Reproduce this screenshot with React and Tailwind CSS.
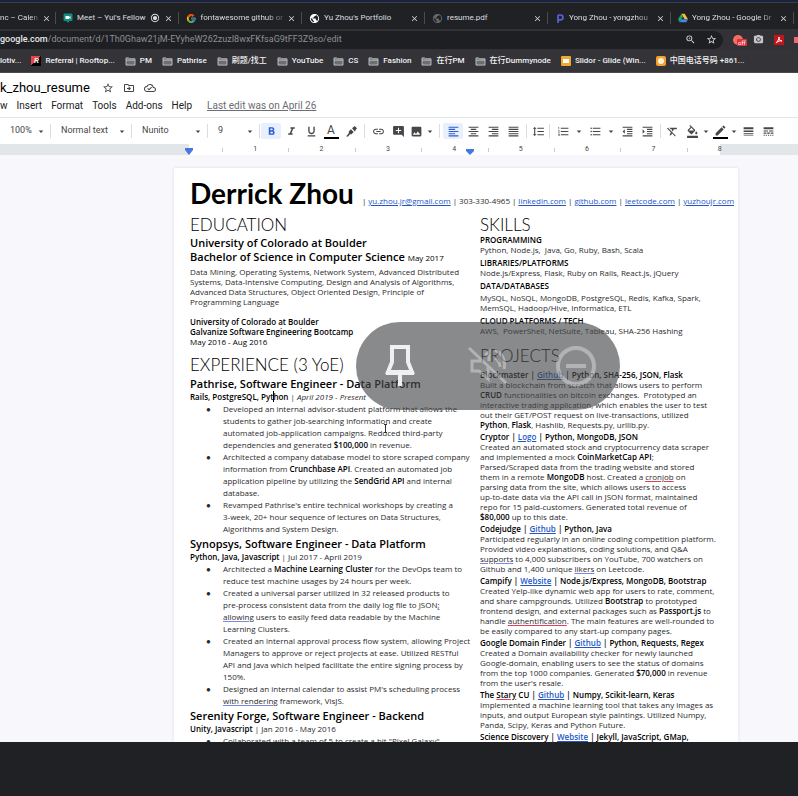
import React from "react";
import {
  MdStarBorder, MdOutlineDriveFileMove, MdOutlineCloudDone, MdFormatBold, MdFormatItalic,
  MdFormatUnderlined, MdLink, MdAddComment, MdImage,
  MdFormatAlignLeft, MdFormatAlignCenter, MdFormatAlignRight, MdFormatAlignJustify,
  MdFormatLineSpacing, MdFormatListNumbered, MdFormatListBulleted, MdFormatIndentDecrease,
  MdFormatIndentIncrease, MdFormatClear, MdFormatColorFill, MdEdit, MdLineWeight, MdLineStyle,
  MdArrowDropDown, MdClose, MdPublic, MdZoomIn, MdCameraAlt, MdRadioButtonChecked,
} from "react-icons/md";
import { FcGoogle } from "react-icons/fc";

const DriveLogo = () => (
  <svg viewBox="0 0 24 22" className="h-2.5 w-2.5">
    <path d="M8 1h8l8 13h-8z" fill="#fbc02d" />
    <path d="M8 1L0 14l4 7L12 8z" fill="#1fa463" />
    <path d="M8 14h16l-4 7H4z" fill="#4285f4" />
  </svg>
);
const MeetLogo = () => (
  <svg viewBox="0 0 20 20" className="h-2.5 w-2.5">
    <path d="M3 1h14a2 2 0 0 1 2 2v11a2 2 0 0 1-2 2h-4l-3 4-3-4H3a2 2 0 0 1-2-2V3a2 2 0 0 1 2-2z" fill="#128c7e" />
    <path d="M5 6h7v2l3-2v6l-3-2v2H5z" fill="#fff" />
  </svg>
);
const PLogo = () => (
  <svg viewBox="0 0 10 10" className="h-2.5 w-2.5" fill="none" stroke="#5b5fe0" strokeWidth="1.7">
    <path d="M3 10V2M3 2h2.500a2.300 2.300 0 0 1 0 4.800H3" />
  </svg>
);
const Marker = () => (
  <svg viewBox="0 0 24 24" width="1em" height="1em" fill="currentColor">
    <path d="M13 6l5-4 4 4-4 6zM11 8l5 5-4 4H9l-3 4H2l5-6v-3z" />
  </svg>
);

const tabs = [
  { icon: <MeetLogo />, title: "Meet – Yui's Fellow", audio: true },
  { icon: <FcGoogle className="text-[11px]" />, title: "fontawesome github or", fade: true },
  { icon: <MdPublic className="text-[11px] text-white" />, title: "Yu Zhou's Portfolio" },
  { icon: <MdPublic className="text-[11px] text-[#66686b]" />, title: "resume.pdf" },
  { icon: <PLogo />, title: "Yong Zhou - yongzhou", fade: true },
  { icon: <DriveLogo />, title: "Yong Zhou - Google Dr", fade: true },
];

function TabTitle({ fade, children }) {
  return (
    <span className={"flex-1 whitespace-nowrap" + (fade ? " [mask-image:linear-gradient(to_right,black_80%,#0004)]" : "")}>
      {children}
    </span>
  );
}

function CloseTab() {
  return (
    <button aria-label="Close tab" className="text-[9px] text-[#d5d6d8]">
      <MdClose />
    </button>
  );
}

const Folder = () => (
  <svg viewBox="0 0 12 10" className="h-[9px] w-[11px]" fill="#6d6e72" stroke="#c3c4c7">
    <path d="M1 1h3l1 1h6v7H1zM1 3.500h10" />
  </svg>
);
const bookmarks = [
  {
    icon: (
      <span className="flex h-2.5 w-2.5 items-center justify-center bg-linear-to-br from-[#e8434b] from-50% to-black to-50% font-bold italic">R</span>
    ),
    title: "Referral | Rooftop...",
  },
  { icon: <Folder />, title: "PM" },
  { icon: <Folder />, title: "Pathrise" },
  { icon: <Folder />, title: "刷题/找工" },
  { icon: <Folder />, title: "YouTube" },
  { icon: <Folder />, title: "CS" },
  { icon: <Folder />, title: "Fashion" },
  { icon: <Folder />, title: "在行PM" },
  { icon: <Folder />, title: "在行Dummynode" },
  {
    icon: <span className="flex h-2.5 w-2.5 items-center justify-center rounded-[1px] bg-[#f0a92e]"><span className="h-1 w-1.5 bg-white" /></span>,
    title: "Slidor - Glide (Win...",
  },
  {
    icon: <span className="flex h-2.5 w-2.5 items-center justify-center rounded-[2px] bg-[#f3a32b]"><span className="h-1.5 w-1.5 rounded-full bg-[#fff3dc]" /></span>,
    title: "中国电话号码 +861...",
  },
];

function Browser() {
  return (
    <header className="shrink-0 overflow-hidden bg-[#202124] font-['Roboto','Noto_Sans_CJK_SC',sans-serif] text-[8px] text-[#dcdde0]">
      <div className="h-0.5 bg-[#1b2340]" />
      <div className="flex h-[27px] items-center border-t border-[#3c3d40] pt-2 pb-1">
        <div className="flex w-14 shrink-0 items-center gap-1 border-r border-[#4a4b4e] pr-[5px]">
          <TabTitle fade>nc – Calen</TabTitle>
          <CloseTab />
        </div>
        {tabs.map((t) => (
          <div key={t.title} className="flex w-[123px] shrink-0 items-center gap-1 border-r border-[#4a4b4e] pr-[5px] pl-[7px]">
            {t.icon}
            <TabTitle fade={t.fade}>{t.title}</TabTitle>
            {t.audio && <MdRadioButtonChecked className="text-[10px]" />}
            <CloseTab />
          </div>
        ))}
      </div>
      <div className="flex h-[21px] items-center gap-2.5 bg-[#323236]">
        <div className="flex h-[18px] min-w-0 flex-1 items-center gap-2.5 rounded-r-full bg-[#1e1f22] pr-1.5">
          <span className="flex-1 truncate text-[9px] text-[#8e8f93]">
            <span className="font-medium text-[#e8e9eb]">google.com</span>
            /document/d/1Th0Ghaw21jM-EYyheW262zuzI8wxFKfsaG9tFF3Z9so/edit
          </span>
          <button aria-label="Zoom" className="text-[11px]"><MdZoomIn /></button>
          <button aria-label="Bookmark" className="text-[11px]"><MdStarBorder /></button>
        </div>
        <button aria-label="Blocker, off" className="relative h-2.5 w-2.5 rounded-full bg-[#f0705f]">
          <span className="absolute top-1 left-1 rounded-[1px] bg-[#d8323c] px-px text-[6px] leading-[7px] text-white">off</span>
        </button>
        <button aria-label="Screenshot" className="text-[11px] text-[#c4c5c8]"><MdCameraAlt /></button>
        <button aria-label="PDF tools" className="h-2.5 w-2.5 bg-[#c4141c]">
          <svg viewBox="0 0 10 10" fill="none" stroke="#fff"><path d="M2 8C4 6 5 4 5 2c0 2 1 4 3 4C6 5.500 4 6 2 8z" /></svg>
        </button>
        <span className="h-1.5 w-1 bg-[#ef6a6a]" />
      </div>
      <nav aria-label="Bookmarks" className="flex h-[23px] items-center gap-2.5 border-b border-[#4a4a4e] bg-[#343338] font-medium whitespace-nowrap text-[#f1f1f3]">
        <a href="#motiv">lotiv...</a>
        {bookmarks.map((b) => (
          <a key={b.title} href={"#" + b.title} className="flex items-center gap-1">
            {b.icon}
            {b.title}
          </a>
        ))}
      </nav>
    </header>
  );
}

const Sep = () => <span className="mx-[3px] h-3.5 w-px shrink-0 bg-[#dadce0]" />;
const Caret = () => <MdArrowDropDown className="w-3 shrink-0 text-[11px]" />;

function Tool({ label, icon: Icon, active, narrow, bar }) {
  return (
    <button
      aria-label={label}
      className={
        "flex h-4 shrink-0 items-center justify-center text-[13px] " +
        (narrow ? "w-4 " : "w-5 ") +
        (active ? "rounded-[2px] bg-[#e8f0fe] text-[#2a5bd0]" : "")
      }
    >
      {bar ? <span className="border-b-2 border-black px-px"><Icon /></span> : <Icon />}
    </button>
  );
}

function Field({ label, value, className }) {
  return (
    <label className={"flex h-3.5 shrink-0 items-center border-r border-[#dadce0] pr-[3px] pl-2.5 " + className}>
      <select aria-label={label} className="min-w-0 flex-1 appearance-none">
        <option>{value}</option>
      </select>
      <Caret />
    </label>
  );
}

function DocsBar() {
  return (
    <div className="shrink-0 overflow-hidden bg-white font-['Roboto',sans-serif] text-[#444649]">
      <div className="flex h-[26px] items-center gap-2.5 pt-1">
        <input aria-label="Document name" defaultValue="k_zhou_resume" className="h-[18px] w-[92px] text-[13px] text-black" />
        <span className="flex h-[18px] items-center gap-[9px] text-[12px]">
          <button aria-label="Star"><MdStarBorder /></button>
          <button aria-label="Move"><MdOutlineDriveFileMove /></button>
          <button aria-label="Saved"><MdOutlineCloudDone /></button>
        </span>
      </div>
      <div className="flex h-[18px] items-start gap-[9px] text-[10px] leading-[14px] text-[#202124]">
        <button>w</button>
        <button>Insert</button>
        <button>Format</button>
        <button>Tools</button>
        <button>Add-ons</button>
        <button>Help</button>
        <a href="#history" className="ml-1.5 text-[#6a6d71] underline">Last edit was on April 26</a>
      </div>
      <div className="flex h-[27px] items-center border-t border-[#e4e5e8] text-[9px]">
        <Field label="Zoom" value="100%" className="w-[51px]" />
        <Field label="Style" value="Normal text" className="w-[81px]" />
        <Field label="Font" value="Nunito" className="w-[76px]" />
        <Field label="Size" value="9" className="mr-px w-[52px]" />
        <Tool label="Bold" icon={MdFormatBold} active />
        <Tool label="Italic" icon={MdFormatItalic} />
        <Tool label="Underline" icon={MdFormatUnderlined} />
        <button aria-label="Text color" className="flex w-5 justify-center">
          <span className="w-[15px] border-b-2 border-black text-center text-[12px] leading-[13px]">A</span>
        </button>
        <Tool label="Highlight" icon={Marker} />
        <Sep />
        <Tool label="Link" icon={MdLink} />
        <Tool label="Comment" icon={MdAddComment} />
        <Tool label="Image" icon={MdImage} narrow />
        <Caret />
        <Sep />
        <Tool label="Align left" icon={MdFormatAlignLeft} active />
        <Tool label="Align center" icon={MdFormatAlignCenter} />
        <Tool label="Align right" icon={MdFormatAlignRight} />
        <Tool label="Justify" icon={MdFormatAlignJustify} />
        <Sep />
        <Tool label="Line spacing" icon={MdFormatLineSpacing} narrow />
        <Sep />
        <Tool label="Numbered list" icon={MdFormatListNumbered} />
        <Caret />
        <Tool label="Bulleted list" icon={MdFormatListBulleted} />
        <Caret />
        <Tool label="Outdent" icon={MdFormatIndentDecrease} />
        <Tool label="Indent" icon={MdFormatIndentIncrease} />
        <Sep />
        <Tool label="Clear formatting" icon={MdFormatClear} narrow />
        <span className="w-1" />
        <Tool label="Fill color" icon={MdFormatColorFill} narrow />
        <Caret />
        <Tool label="Border color" icon={MdEdit} narrow bar />
        <Caret />
        <Tool label="Border width" icon={MdLineWeight} narrow />
        <span className="w-1" />
        <Tool label="Border dash" icon={MdLineStyle} narrow />
      </div>
      <div className="flex h-[11px] bg-[#e3e6e8] text-[7px] leading-[11px]">
        <div className="relative ml-[189px] w-[531px] bg-white">
          <div className="absolute inset-y-0 left-[33px] grid w-full grid-cols-8 text-center">
            {[1, 2, 3, 4, 5, 6, 7, 8].map((n) => (
              <span key={n} className="relative">
                {n}
                <i className="absolute top-1 left-0 h-1 w-px bg-[#c8cacd]" />
              </span>
            ))}
          </div>
          <svg viewBox="0 0 10 7" className="absolute top-1 -left-[5px] h-[7px] w-2.5"><path d="M1 0h8v2L5 7 1 2z" fill="#4478e8" /></svg>
          <svg viewBox="0 0 10 7" className="absolute top-1 left-[276px] h-[7px] w-2.5"><path d="M1 1h8v2L5 7 1 3z" fill="#4478e8" /></svg>
        </div>
      </div>
    </div>
  );
}

const A = ({ children }) => <a href={"#" + children} className="text-[#2457c5] underline">{children}</a>;
const B = ({ children }) => <b className="font-semibold text-black">{children}</b>;
const Typo = ({ children }) => <span className="underline decoration-[#e0405a]">{children}</span>;
const Hint = ({ children }) => <span className="underline decoration-[#7a88e6]">{children}</span>;

function Lines({ lines }) {
  return lines.map((l, i) => <span key={i} className="block">{l}</span>);
}

const H2 = ({ children }) => <h2 className="font-['Lato',sans-serif] text-[17px] leading-5 font-light text-black">{children}</h2>;

function Job({ title, stack, dates, items }) {
  return (
    <section>
      <h3 className="text-[11px] leading-[14px] font-semibold text-black">{title}</h3>
      <p className="leading-3"><B>{stack}</B> | {dates}</p>
      <ul className="leading-3">
        {items.map((lines, i) => (
          <li key={i} className="flex pl-4">
            <span className="w-[17px] shrink-0">●</span>
            <div><Lines lines={lines} /></div>
          </li>
        ))}
      </ul>
    </section>
  );
}

function Skill({ title, lines, spaced }) {
  return (
    <section>
      <h3 className="font-semibold text-black">{title}</h3>
      <p className={spaced ? "pt-0.5" : ""}><Lines lines={lines} /></p>
    </section>
  );
}

function Project({ title, link, stack, lines }) {
  return (
    <section>
      <h3 className="font-semibold text-black">{title} | <A>{link}</A> | {stack}</h3>
      <p><Lines lines={lines} /></p>
    </section>
  );
}

function Paper() {
  return (
    <article className="ml-[174px] w-[564px] shrink-0 bg-white px-4 pt-1.5 font-['Open_Sans',sans-serif] text-[8px] leading-[10px] whitespace-nowrap text-[#2a2a2c] shadow-[0_0_3px_#dcdde2]">
      <div className="flex h-[41px] items-baseline gap-2">
        <h1 className="font-['Lato',sans-serif] text-[28px] leading-[38px] font-bold text-black">Derrick Zhou</h1>
        <p className="flex gap-0.5">
          <span>|</span><A>yu.zhou.jr@gmail.com</A><span>|</span><span>303-330-4965</span><span>|</span>
          <A>linkedin.com</A><span>|</span><A>github.com</A><span>|</span><A>leetcode.com</A><span>|</span><A>yuzhoujr.com</A>
        </p>
      </div>
      <div className="flex">
        <div className="w-[290px] shrink-0">
          <H2>EDUCATION</H2>
          <h3 className="pt-px text-[11px] leading-[14px] font-semibold text-black">
            University of Colorado at Boulder<br />
            Bachelor of Science in Computer Science <span className="text-[8px] font-normal">May 2017</span>
          </h3>
          <p className="pt-0.5">
            <Lines lines={[
              "Data Mining, Operating Systems, Network System, Advanced Distributed",
              "Systems, Data-Intensive Computing, Design and Analysis of Algorithms,",
              "Advanced Data Structures, Object Oriented Design, Principle of",
              "Programming Language",
            ]} />
          </p>
          <p className="pt-2.5 text-black">
            <B>University of Colorado at Boulder</B><br />
            <B>Galvanize Software Engineering Bootcamp</B><br />
            May 2016 - Aug 2016
          </p>
          <div className="pt-2"><H2>EXPERIENCE (3 YoE)</H2></div>
          <div className="flex flex-col gap-0.5 pt-0.5">
            <Job
              title="Pathrise, Software Engineer - Data Platform"
              stack={<>Rails, PostgreSQL, Pyt<span className="relative"><span className="absolute inset-y-0 left-0 w-px bg-black" />hon</span></>}
              dates={<i>April 2019 - Present</i>}
              items={[
                ["Developed an internal advisor-student platform that allows the", "students to gather job-searching information and create", "automated job-application campaigns. Reduced third-party", <>dependencies and generated <B>$100,000</B> in revenue.</>],
                ["Architected a company database model to store scraped company", <>information from <B>Crunchbase API</B>. Created an automated job</>, <>application pipeline by utilizing the <B>SendGrid API</B> and internal</>, "database."],
                ["Revamped Pathrise's entire technical workshops by creating a", "3-week, 20+ hour sequence of lectures on Data Structures,", "Algorithms and System Design."],
              ]}
            />
            <Job
              title="Synopsys, Software Engineer - Data Platform"
              stack="Python, Java, Javascript"
              dates="Jul 2017 - April 2019"
              items={[
                [<>Architected a <B>Machine Learning Cluster</B> for the DevOps team to</>, "reduce test machine usages by 24 hours per week."],
                ["Created a universal parser utilized in 32 released products to", <>pre-process consistent data from the daily log file to JSON<Hint>;</Hint></>, <><Hint>allowing</Hint> users to easily feed data readable by the Machine</>, "Learning Clusters."],
                ["Created an internal approval process flow system, allowing Project", "Managers to approve or reject projects at ease. Utilized RESTful", "API and Java which helped facilitate the entire signing process by", "150%."],
                ["Designed an internal calendar to assist PM's scheduling process", <><Hint>with rendering</Hint> framework, VisJS.</>],
              ]}
            />
            <Job
              title="Serenity Forge, Software Engineer - Backend"
              stack="Unity, Javascript"
              dates="Jan 2016 - May 2016"
              items={[['Collaborated with a team of 5 to create a hit "Pixel Galaxy"']]}
            />
          </div>
        </div>
        <div>
          <H2>SKILLS</H2>
          <div className="flex flex-col gap-[3px]">
            <Skill title="PROGRAMMING" lines={["Python, Node.js, \u00a0Java, Go, Ruby, Bash, Scala"]} />
            <Skill title="LIBRARIES/PLATFORMS" lines={["Node.js/Express, Flask, Ruby on Rails, React.js, jQuery"]} />
            <Skill title="DATA/DATABASES" spaced lines={["MySQL, NoSQL, MongoDB, PostgreSQL, Redis, Kafka, Spark,", "MemSQL, Hadoop/Hive, Informatica, ETL"]} />
            <Skill title="CLOUD PLATFORMS / TECH" lines={["AWS, \u00a0PowerShell, NetSuite, Tableau, SHA-256 Hashing"]} />
          </div>
          <div className="pt-2.5"><H2>PROJECTS</H2></div>
          <div className="flex flex-col gap-0.5 pt-1">
            <Project title="Blockmaster" link="Github" stack="Python, SHA-256, JSON, Flask" lines={[
              "Built a blockchain from scratch that allows users to perform",
              <><B>CRUD</B> functionalities on bitcoin exchanges. &nbsp;Prototyped an</>,
              "interactive trading application, which enables the user to test",
              "out their GET/POST request on live-transactions, utilized",
              <><B>Python</B>, <B>Flask</B>, Hashlib, Requests.py, urllib.py.</>,
            ]} />
            <Project title="Cryptor" link="Logo" stack="Python, MongoDB, JSON" lines={[
              "Created an automated stock and cryptocurrency data scraper",
              <>and implemented a mock <B>CoinMarketCap API</B>;</>,
              "Parsed/Scraped data from the trading website and stored",
              <>them in a remote <B>MongoDB</B> host. Created a <Typo>cronjob</Typo> on</>,
              "parsing data from the site, which allows users to access",
              "up-to-date data via the API call in JSON format, maintained",
              "repo for 15 paid-customers. Generated total revenue of",
              <><B>$80,000</B> up to this date.</>,
            ]} />
            <Project title="Codejudge" link="Github" stack="Python, Java" lines={[
              "Participated regularly in an online coding competition platform.",
              "Provided video explanations, coding solutions, and Q&A",
              <><Hint>supports</Hint> to 4,000 subscribers on YouTube, 700 watchers on</>,
              <>Github and 1,400 unique <Hint>likers</Hint> on Leetcode.</>,
            ]} />
            <Project title="Campify" link="Website" stack="Node.js/Express, MongoDB, Bootstrap" lines={[
              "Created Yelp-like dynamic web app for users to rate, comment,",
              <>and share campgrounds. Utilized <B>Bootstrap</B> to prototyped</>,
              <>frontend design, and external packages such as <B>Passport.js</B> to</>,
              <>handle <Typo>authentification</Typo>. The main features are well-rounded to</>,
              "be easily compared to any start-up company pages.",
            ]} />
            <Project title="Google Domain Finder" link="Github" stack="Python, Requests, Regex" lines={[
              "Created a Domain availability checker for newly launched",
              "Google-domain, enabling users to see the status of domains",
              <>from the top 1000 companies. Generated <B>$70,000</B> in revenue</>,
              "from the user's resale.",
            ]} />
            <Project title={<>The <Typo>Stary</Typo> CU</>} link="Github" stack="Numpy, Scikit-learn, Keras" lines={[
              "Implemented a machine learning tool that takes any images as",
              "inputs, and output European style paintings. Utilized Numpy,",
              "Panda, Scipy, Keras and Python Future.",
            ]} />
            <Project title="Science Discovery" link="Website" stack="Jekyll, JavaScript, GMap," lines={[]} />
          </div>
        </div>
      </div>
    </article>
  );
}

function CallControls() {
  return (
    <div className="absolute top-[322px] left-[356px] flex h-[88px] w-[264px] items-center justify-between rounded-full bg-[#47484a]/64 px-6">
      <button aria-label="Pin" className="text-[#eef0f1]">
        <svg width="40" height="48" viewBox="0 0 40 48" fill="none" stroke="currentColor" strokeWidth="4">
          <path d="M12 5h16v15l4 10H8l4-10zM20 30v14" />
          <path d="M6 31h28" />
        </svg>
      </button>
      <button aria-label="Mute" className="text-white/35">
        <svg width="40" height="40" viewBox="0 0 40 40" fill="none" stroke="currentColor" strokeWidth="3">
          <path d="M1 2l37 35M14 15H4v10h7l9 8v-12M17 9l4-3v9M27 12c3 2 5 5 5 9M27 4c7 3 11 10 9 19" />
        </svg>
      </button>
      <button aria-label="Remove" className="text-white/35">
        <svg width="40" height="40" viewBox="0 0 40 40" fill="none" stroke="currentColor" strokeWidth="4">
          <circle cx="20" cy="20" r="18" />
          <path d="M10 20h20" />
        </svg>
      </button>
    </div>
  );
}

export default function App() {
  return (
    <div className="relative flex h-screen flex-col overflow-hidden bg-[#202125]">
      <Browser />
      <DocsBar />
      <main className="flex min-h-0 flex-1 overflow-hidden bg-[#f8f8fc] pt-[13px]">
        <Paper />
      </main>
      <footer className="h-[54px] shrink-0 bg-[#202125]" />
      <CallControls />
      <svg viewBox="0 0 5 9" className="absolute top-[424px] left-[383px] h-[9px] w-[5px]" fill="none" stroke="#333">
        <path d="M1 .5h3M2.500 1v7M1 8.500h3" />
      </svg>
    </div>
  );
}
